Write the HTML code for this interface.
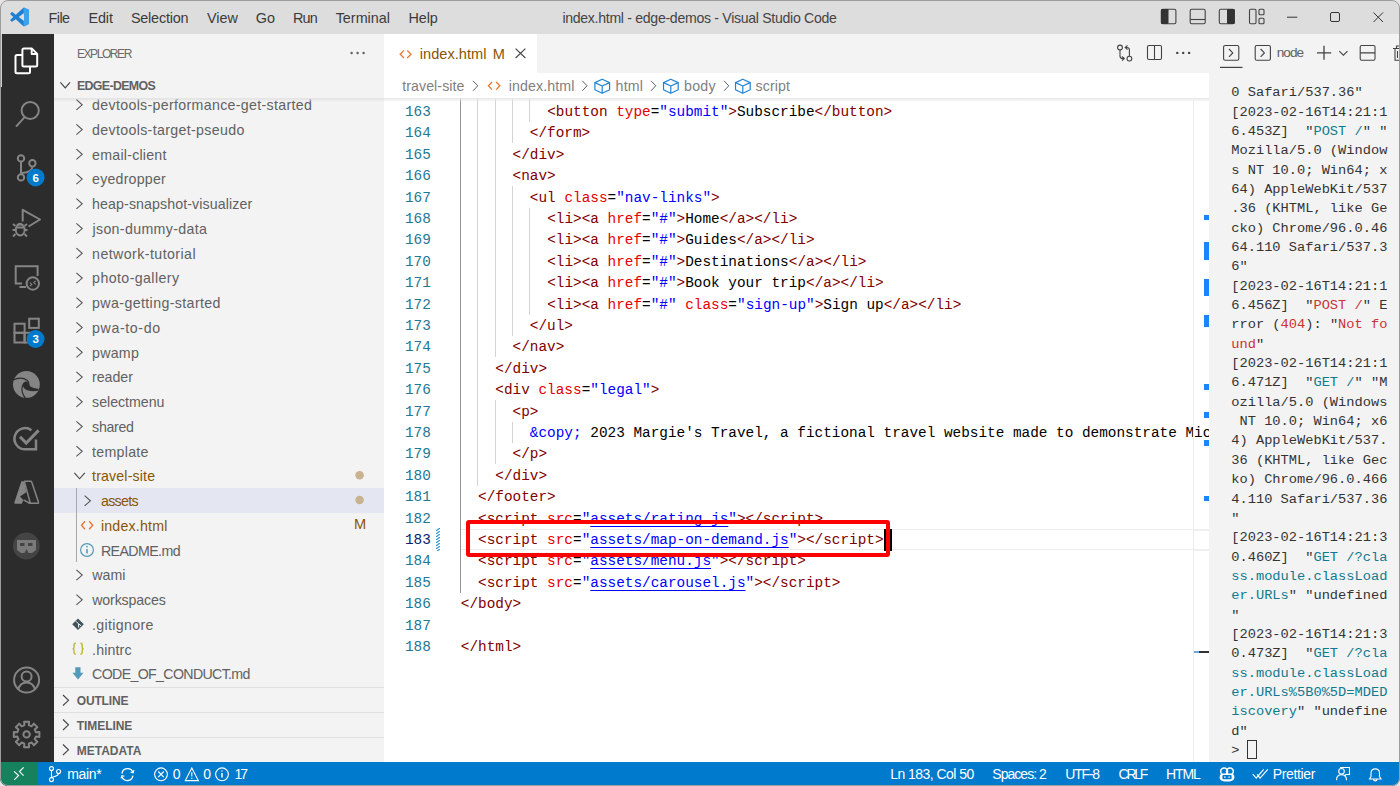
<!DOCTYPE html>
<html><head><meta charset="utf-8">
<style>
*{margin:0;padding:0;box-sizing:border-box}
html,body{width:1400px;height:786px;overflow:hidden;background:#ffffff}
body{font-family:"Liberation Sans",sans-serif;position:relative}
.a{position:absolute}
svg.a{overflow:visible}
</style></head><body>

<div class="a" style="left:0;top:0;width:1400px;height:786px;background:#e8e4e4"></div>
<div class="a" style="left:0;top:0;width:1400px;height:786px;border-radius:8px;overflow:hidden;background:#fff">
<div class="a" style="left:0px;top:0px;width:1400px;height:34px;background:#dddddd;"></div>
<div class="a" style="left:0px;top:34px;width:54px;height:728px;background:#2c2c2c;"></div>
<div class="a" style="left:54px;top:34px;width:330px;height:728px;background:#f3f3f3;"></div>
<div class="a" style="left:384px;top:34px;width:825px;height:39px;background:#f3f3f3;"></div>
<div class="a" style="left:384px;top:34px;width:153px;height:39px;background:#ffffff;"></div>
<div class="a" style="left:384px;top:73px;width:825px;height:689px;background:#ffffff;"></div>
<div class="a" style="left:1209px;top:34px;width:191px;height:728px;background:#f3f3f3;"></div>
<div class="a" style="left:0px;top:762px;width:1400px;height:24px;background:#007acc;"></div>
<div class="a" style="left:0px;top:762px;width:38px;height:24px;background:#16825d;"></div>
<div class="a" style="left:48.60px;top:10.66px;font-family:'Liberation Sans',sans-serif;font-size:14.4px;line-height:14.4px;color:#3b3b3b;letter-spacing:-0.600px;white-space:pre;">File</div>
<div class="a" style="left:88.60px;top:10.66px;font-family:'Liberation Sans',sans-serif;font-size:14.4px;line-height:14.4px;color:#3b3b3b;letter-spacing:-0.167px;white-space:pre;">Edit</div>
<div class="a" style="left:130.90px;top:10.66px;font-family:'Liberation Sans',sans-serif;font-size:14.4px;line-height:14.4px;color:#3b3b3b;letter-spacing:-0.194px;white-space:pre;">Selection</div>
<div class="a" style="left:207.00px;top:10.66px;font-family:'Liberation Sans',sans-serif;font-size:14.4px;line-height:14.4px;color:#3b3b3b;letter-spacing:0.000px;white-space:pre;">View</div>
<div class="a" style="left:255.70px;top:10.66px;font-family:'Liberation Sans',sans-serif;font-size:14.4px;line-height:14.4px;color:#3b3b3b;letter-spacing:0.000px;white-space:pre;">Go</div>
<div class="a" style="left:292.90px;top:10.66px;font-family:'Liberation Sans',sans-serif;font-size:14.4px;line-height:14.4px;color:#3b3b3b;letter-spacing:-0.800px;white-space:pre;">Run</div>
<div class="a" style="left:335.70px;top:10.66px;font-family:'Liberation Sans',sans-serif;font-size:14.4px;line-height:14.4px;color:#3b3b3b;letter-spacing:-0.014px;white-space:pre;">Terminal</div>
<div class="a" style="left:408.60px;top:10.66px;font-family:'Liberation Sans',sans-serif;font-size:14.4px;line-height:14.4px;color:#3b3b3b;letter-spacing:-0.167px;white-space:pre;">Help</div>
<div class="a" style="left:562.40px;top:10.91px;font-family:'Liberation Sans',sans-serif;font-size:14.1px;line-height:14.1px;color:#444444;letter-spacing:-0.297px;white-space:pre;">index.html - edge-demos - Visual Studio Code</div>
<div class="a" style="left:76.90px;top:48.40px;font-family:'Liberation Sans',sans-serif;font-size:12px;line-height:12px;color:#6a6a6a;letter-spacing:-1.421px;white-space:pre;">EXPLORER</div>
<div class="a" style="left:76.90px;top:80.06px;font-family:'Liberation Sans',sans-serif;font-weight:700;font-size:12.4px;line-height:12.4px;color:#616161;letter-spacing:-0.639px;white-space:pre;">EDGE-DEMOS</div>
<div class="a" style="left:92.10px;top:98.03px;font-family:'Liberation Sans',sans-serif;font-size:14.2px;line-height:14.2px;color:#616161;letter-spacing:0.324px;white-space:pre;">devtools-performance-get-started</div>
<div class="a" style="left:92.10px;top:122.78px;font-family:'Liberation Sans',sans-serif;font-size:14.2px;line-height:14.2px;color:#616161;letter-spacing:0.336px;white-space:pre;">devtools-target-pseudo</div>
<div class="a" style="left:92.10px;top:147.53px;font-family:'Liberation Sans',sans-serif;font-size:14.2px;line-height:14.2px;color:#616161;letter-spacing:0.236px;white-space:pre;">email-client</div>
<div class="a" style="left:92.10px;top:172.28px;font-family:'Liberation Sans',sans-serif;font-size:14.2px;line-height:14.2px;color:#616161;letter-spacing:0.206px;white-space:pre;">eyedropper</div>
<div class="a" style="left:92.10px;top:197.03px;font-family:'Liberation Sans',sans-serif;font-size:14.2px;line-height:14.2px;color:#616161;letter-spacing:0.102px;white-space:pre;">heap-snapshot-visualizer</div>
<div class="a" style="left:92.45px;top:221.78px;font-family:'Liberation Sans',sans-serif;font-size:14.2px;line-height:14.2px;color:#616161;letter-spacing:0.346px;white-space:pre;">json-dummy-data</div>
<div class="a" style="left:92.10px;top:246.53px;font-family:'Liberation Sans',sans-serif;font-size:14.2px;line-height:14.2px;color:#616161;letter-spacing:0.430px;white-space:pre;">network-tutorial</div>
<div class="a" style="left:92.10px;top:271.28px;font-family:'Liberation Sans',sans-serif;font-size:14.2px;line-height:14.2px;color:#616161;letter-spacing:0.408px;white-space:pre;">photo-gallery</div>
<div class="a" style="left:92.10px;top:296.03px;font-family:'Liberation Sans',sans-serif;font-size:14.2px;line-height:14.2px;color:#616161;letter-spacing:0.386px;white-space:pre;">pwa-getting-started</div>
<div class="a" style="left:92.10px;top:320.78px;font-family:'Liberation Sans',sans-serif;font-size:14.2px;line-height:14.2px;color:#616161;letter-spacing:0.606px;white-space:pre;">pwa-to-do</div>
<div class="a" style="left:92.10px;top:345.53px;font-family:'Liberation Sans',sans-serif;font-size:14.2px;line-height:14.2px;color:#616161;letter-spacing:0.250px;white-space:pre;">pwamp</div>
<div class="a" style="left:92.10px;top:370.28px;font-family:'Liberation Sans',sans-serif;font-size:14.2px;line-height:14.2px;color:#616161;letter-spacing:-0.050px;white-space:pre;">reader</div>
<div class="a" style="left:92.10px;top:395.03px;font-family:'Liberation Sans',sans-serif;font-size:14.2px;line-height:14.2px;color:#616161;letter-spacing:-0.022px;white-space:pre;">selectmenu</div>
<div class="a" style="left:92.10px;top:419.78px;font-family:'Liberation Sans',sans-serif;font-size:14.2px;line-height:14.2px;color:#616161;letter-spacing:-0.300px;white-space:pre;">shared</div>
<div class="a" style="left:92.10px;top:444.53px;font-family:'Liberation Sans',sans-serif;font-size:14.2px;line-height:14.2px;color:#616161;letter-spacing:0.279px;white-space:pre;">template</div>
<div class="a" style="left:92.10px;top:469.28px;font-family:'Liberation Sans',sans-serif;font-size:14.2px;line-height:14.2px;color:#895503;letter-spacing:0.145px;white-space:pre;">travel-site</div>
<div class="a" style="left:54px;top:488.1px;width:330px;height:24.75px;background:#e4e6f1;"></div>
<div class="a" style="left:100.90px;top:494.03px;font-family:'Liberation Sans',sans-serif;font-size:14.2px;line-height:14.2px;color:#895503;letter-spacing:-0.650px;white-space:pre;">assets</div>
<div class="a" style="left:100.90px;top:518.78px;font-family:'Liberation Sans',sans-serif;font-size:14.2px;line-height:14.2px;color:#895503;letter-spacing:0.200px;white-space:pre;">index.html</div>
<div class="a" style="left:100.90px;top:543.53px;font-family:'Liberation Sans',sans-serif;font-size:14.2px;line-height:14.2px;color:#616161;letter-spacing:-0.588px;white-space:pre;">README.md</div>
<div class="a" style="left:92.15px;top:568.28px;font-family:'Liberation Sans',sans-serif;font-size:14.2px;line-height:14.2px;color:#616161;letter-spacing:0.067px;white-space:pre;">wami</div>
<div class="a" style="left:92.15px;top:593.03px;font-family:'Liberation Sans',sans-serif;font-size:14.2px;line-height:14.2px;color:#616161;letter-spacing:-0.122px;white-space:pre;">workspaces</div>
<div class="a" style="left:92.10px;top:617.78px;font-family:'Liberation Sans',sans-serif;font-size:14.2px;line-height:14.2px;color:#616161;letter-spacing:0.322px;white-space:pre;">.gitignore</div>
<div class="a" style="left:92.10px;top:642.53px;font-family:'Liberation Sans',sans-serif;font-size:14.2px;line-height:14.2px;color:#616161;letter-spacing:0.125px;white-space:pre;">.hintrc</div>
<div class="a" style="left:92.10px;top:667.28px;font-family:'Liberation Sans',sans-serif;font-size:14.2px;line-height:14.2px;color:#616161;letter-spacing:-0.656px;white-space:pre;">CODE_OF_CONDUCT.md</div>
<div class="a" style="left:384px;top:98px;width:825px;height:664px;overflow:hidden">
<div class="a" style="left:77px;top:430.50px;width:809px;height:21.4px;border-top:1.5px solid #eeeeee;border-bottom:1.5px solid #eeeeee"></div>
<div class="a" style="left:76.00px;top:-18.90px;width:1px;height:513.60px;background:#939393"></div>
<div class="a" style="left:93.27px;top:-18.90px;width:1px;height:406.60px;background:#d3d3d3"></div>
<div class="a" style="left:110.54px;top:-18.90px;width:1px;height:278.20px;background:#d3d3d3"></div>
<div class="a" style="left:110.54px;top:302.10px;width:1px;height:64.20px;background:#d3d3d3"></div>
<div class="a" style="left:127.80px;top:-18.90px;width:1px;height:64.20px;background:#d3d3d3"></div>
<div class="a" style="left:127.80px;top:88.10px;width:1px;height:149.80px;background:#d3d3d3"></div>
<div class="a" style="left:127.80px;top:323.50px;width:1px;height:21.40px;background:#d3d3d3"></div>
<div class="a" style="left:145.07px;top:-18.90px;width:1px;height:42.80px;background:#d3d3d3"></div>
<div class="a" style="left:145.07px;top:109.50px;width:1px;height:107.00px;background:#d3d3d3"></div>
<div class="a" style="left:163.14px;top:-14.34px;font-family:'Liberation Mono',monospace;font-size:14.39px;line-height:14.39px;white-space:pre"><span style="color:#800000">&lt;input</span><span style="color:#000000"> </span><span style="color:#e50000">type</span><span style="color:#000000">=</span><span style="color:#0000ff">&quot;email&quot;</span><span style="color:#000000"> </span><span style="color:#e50000">placeholder</span><span style="color:#000000">=</span><span style="color:#0000ff">&quot;Email&quot;</span><span style="color:#800000">&gt;</span></div>
<div class="a" style="left:163.14px;top:7.06px;font-family:'Liberation Mono',monospace;font-size:14.39px;line-height:14.39px;white-space:pre"><span style="color:#800000">&lt;button</span><span style="color:#000000"> </span><span style="color:#e50000">type</span><span style="color:#000000">=</span><span style="color:#0000ff">&quot;submit&quot;</span><span style="color:#800000">&gt;</span><span style="color:#000000">Subscribe</span><span style="color:#800000">&lt;/button&gt;</span></div>
<div class="a" style="left:145.87px;top:28.46px;font-family:'Liberation Mono',monospace;font-size:14.39px;line-height:14.39px;white-space:pre"><span style="color:#800000">&lt;/form&gt;</span></div>
<div class="a" style="left:128.60px;top:49.86px;font-family:'Liberation Mono',monospace;font-size:14.39px;line-height:14.39px;white-space:pre"><span style="color:#800000">&lt;/div&gt;</span></div>
<div class="a" style="left:128.60px;top:71.26px;font-family:'Liberation Mono',monospace;font-size:14.39px;line-height:14.39px;white-space:pre"><span style="color:#800000">&lt;nav&gt;</span></div>
<div class="a" style="left:145.87px;top:92.66px;font-family:'Liberation Mono',monospace;font-size:14.39px;line-height:14.39px;white-space:pre"><span style="color:#800000">&lt;ul</span><span style="color:#000000"> </span><span style="color:#e50000">class</span><span style="color:#000000">=</span><span style="color:#0000ff">&quot;nav-links&quot;</span><span style="color:#800000">&gt;</span></div>
<div class="a" style="left:163.14px;top:114.06px;font-family:'Liberation Mono',monospace;font-size:14.39px;line-height:14.39px;white-space:pre"><span style="color:#800000">&lt;li&gt;&lt;a</span><span style="color:#000000"> </span><span style="color:#e50000">href</span><span style="color:#000000">=</span><span style="color:#0000ff">&quot;#&quot;</span><span style="color:#800000">&gt;</span><span style="color:#000000">Home</span><span style="color:#800000">&lt;/a&gt;&lt;/li&gt;</span></div>
<div class="a" style="left:163.14px;top:135.46px;font-family:'Liberation Mono',monospace;font-size:14.39px;line-height:14.39px;white-space:pre"><span style="color:#800000">&lt;li&gt;&lt;a</span><span style="color:#000000"> </span><span style="color:#e50000">href</span><span style="color:#000000">=</span><span style="color:#0000ff">&quot;#&quot;</span><span style="color:#800000">&gt;</span><span style="color:#000000">Guides</span><span style="color:#800000">&lt;/a&gt;&lt;/li&gt;</span></div>
<div class="a" style="left:163.14px;top:156.86px;font-family:'Liberation Mono',monospace;font-size:14.39px;line-height:14.39px;white-space:pre"><span style="color:#800000">&lt;li&gt;&lt;a</span><span style="color:#000000"> </span><span style="color:#e50000">href</span><span style="color:#000000">=</span><span style="color:#0000ff">&quot;#&quot;</span><span style="color:#800000">&gt;</span><span style="color:#000000">Destinations</span><span style="color:#800000">&lt;/a&gt;&lt;/li&gt;</span></div>
<div class="a" style="left:163.14px;top:178.26px;font-family:'Liberation Mono',monospace;font-size:14.39px;line-height:14.39px;white-space:pre"><span style="color:#800000">&lt;li&gt;&lt;a</span><span style="color:#000000"> </span><span style="color:#e50000">href</span><span style="color:#000000">=</span><span style="color:#0000ff">&quot;#&quot;</span><span style="color:#800000">&gt;</span><span style="color:#000000">Book your trip</span><span style="color:#800000">&lt;/a&gt;&lt;/li&gt;</span></div>
<div class="a" style="left:163.14px;top:199.66px;font-family:'Liberation Mono',monospace;font-size:14.39px;line-height:14.39px;white-space:pre"><span style="color:#800000">&lt;li&gt;&lt;a</span><span style="color:#000000"> </span><span style="color:#e50000">href</span><span style="color:#000000">=</span><span style="color:#0000ff">&quot;#&quot;</span><span style="color:#000000"> </span><span style="color:#e50000">class</span><span style="color:#000000">=</span><span style="color:#0000ff">&quot;sign-up&quot;</span><span style="color:#800000">&gt;</span><span style="color:#000000">Sign up</span><span style="color:#800000">&lt;/a&gt;&lt;/li&gt;</span></div>
<div class="a" style="left:145.87px;top:221.06px;font-family:'Liberation Mono',monospace;font-size:14.39px;line-height:14.39px;white-space:pre"><span style="color:#800000">&lt;/ul&gt;</span></div>
<div class="a" style="left:128.60px;top:242.46px;font-family:'Liberation Mono',monospace;font-size:14.39px;line-height:14.39px;white-space:pre"><span style="color:#800000">&lt;/nav&gt;</span></div>
<div class="a" style="left:111.34px;top:263.86px;font-family:'Liberation Mono',monospace;font-size:14.39px;line-height:14.39px;white-space:pre"><span style="color:#800000">&lt;/div&gt;</span></div>
<div class="a" style="left:111.34px;top:285.26px;font-family:'Liberation Mono',monospace;font-size:14.39px;line-height:14.39px;white-space:pre"><span style="color:#800000">&lt;div</span><span style="color:#000000"> </span><span style="color:#e50000">class</span><span style="color:#000000">=</span><span style="color:#0000ff">&quot;legal&quot;</span><span style="color:#800000">&gt;</span></div>
<div class="a" style="left:128.60px;top:306.66px;font-family:'Liberation Mono',monospace;font-size:14.39px;line-height:14.39px;white-space:pre"><span style="color:#800000">&lt;p&gt;</span></div>
<div class="a" style="left:145.87px;top:328.06px;font-family:'Liberation Mono',monospace;font-size:14.39px;line-height:14.39px;white-space:pre"><span style="color:#0000ff">&amp;copy;</span><span style="color:#000000"> 2023 Margie&#x27;s Travel, a fictional travel website made to demonstrate Microsoft Edge</span></div>
<div class="a" style="left:128.60px;top:349.46px;font-family:'Liberation Mono',monospace;font-size:14.39px;line-height:14.39px;white-space:pre"><span style="color:#800000">&lt;/p&gt;</span></div>
<div class="a" style="left:111.34px;top:370.86px;font-family:'Liberation Mono',monospace;font-size:14.39px;line-height:14.39px;white-space:pre"><span style="color:#800000">&lt;/div&gt;</span></div>
<div class="a" style="left:94.07px;top:392.26px;font-family:'Liberation Mono',monospace;font-size:14.39px;line-height:14.39px;white-space:pre"><span style="color:#800000">&lt;/footer&gt;</span></div>
<div class="a" style="left:94.07px;top:413.66px;font-family:'Liberation Mono',monospace;font-size:14.39px;line-height:14.39px;white-space:pre"><span style="color:#800000">&lt;script</span><span style="color:#000000"> </span><span style="color:#e50000">src</span><span style="color:#000000">=</span><span style="color:#0000ff">&quot;</span><span style="color:#0000ff;text-decoration:underline;text-underline-offset:3px">assets/rating.js</span><span style="color:#0000ff">&quot;</span><span style="color:#800000">&gt;&lt;/script&gt;</span></div>
<div class="a" style="left:94.07px;top:435.06px;font-family:'Liberation Mono',monospace;font-size:14.39px;line-height:14.39px;white-space:pre"><span style="color:#800000">&lt;script</span><span style="color:#000000"> </span><span style="color:#e50000">src</span><span style="color:#000000">=</span><span style="color:#0000ff">&quot;</span><span style="color:#0000ff;text-decoration:underline;text-underline-offset:3px">assets/map-on-demand.js</span><span style="color:#0000ff">&quot;</span><span style="color:#800000">&gt;&lt;/script&gt;</span></div>
<div class="a" style="left:94.07px;top:456.46px;font-family:'Liberation Mono',monospace;font-size:14.39px;line-height:14.39px;white-space:pre"><span style="color:#800000">&lt;script</span><span style="color:#000000"> </span><span style="color:#e50000">src</span><span style="color:#000000">=</span><span style="color:#0000ff">&quot;</span><span style="color:#0000ff;text-decoration:underline;text-underline-offset:3px">assets/menu.js</span><span style="color:#0000ff">&quot;</span><span style="color:#800000">&gt;&lt;/script&gt;</span></div>
<div class="a" style="left:94.07px;top:477.86px;font-family:'Liberation Mono',monospace;font-size:14.39px;line-height:14.39px;white-space:pre"><span style="color:#800000">&lt;script</span><span style="color:#000000"> </span><span style="color:#e50000">src</span><span style="color:#000000">=</span><span style="color:#0000ff">&quot;</span><span style="color:#0000ff;text-decoration:underline;text-underline-offset:3px">assets/carousel.js</span><span style="color:#0000ff">&quot;</span><span style="color:#800000">&gt;&lt;/script&gt;</span></div>
<div class="a" style="left:76.80px;top:499.26px;font-family:'Liberation Mono',monospace;font-size:14.39px;line-height:14.39px;white-space:pre"><span style="color:#800000">&lt;/body&gt;</span></div>
<div class="a" style="left:76.80px;top:542.06px;font-family:'Liberation Mono',monospace;font-size:14.39px;line-height:14.39px;white-space:pre"><span style="color:#800000">&lt;/html&gt;</span></div>
</div>
<div class="a" style="left:378.8px;width:52px;text-align:right;top:105.08px;font-family:'Liberation Mono',monospace;font-size:14.37px;line-height:14.37px;color:#237893">163</div>
<div class="a" style="left:378.8px;width:52px;text-align:right;top:126.48px;font-family:'Liberation Mono',monospace;font-size:14.37px;line-height:14.37px;color:#237893">164</div>
<div class="a" style="left:378.8px;width:52px;text-align:right;top:147.88px;font-family:'Liberation Mono',monospace;font-size:14.37px;line-height:14.37px;color:#237893">165</div>
<div class="a" style="left:378.8px;width:52px;text-align:right;top:169.28px;font-family:'Liberation Mono',monospace;font-size:14.37px;line-height:14.37px;color:#237893">166</div>
<div class="a" style="left:378.8px;width:52px;text-align:right;top:190.68px;font-family:'Liberation Mono',monospace;font-size:14.37px;line-height:14.37px;color:#237893">167</div>
<div class="a" style="left:378.8px;width:52px;text-align:right;top:212.08px;font-family:'Liberation Mono',monospace;font-size:14.37px;line-height:14.37px;color:#237893">168</div>
<div class="a" style="left:378.8px;width:52px;text-align:right;top:233.48px;font-family:'Liberation Mono',monospace;font-size:14.37px;line-height:14.37px;color:#237893">169</div>
<div class="a" style="left:378.8px;width:52px;text-align:right;top:254.88px;font-family:'Liberation Mono',monospace;font-size:14.37px;line-height:14.37px;color:#237893">170</div>
<div class="a" style="left:378.8px;width:52px;text-align:right;top:276.28px;font-family:'Liberation Mono',monospace;font-size:14.37px;line-height:14.37px;color:#237893">171</div>
<div class="a" style="left:378.8px;width:52px;text-align:right;top:297.68px;font-family:'Liberation Mono',monospace;font-size:14.37px;line-height:14.37px;color:#237893">172</div>
<div class="a" style="left:378.8px;width:52px;text-align:right;top:319.08px;font-family:'Liberation Mono',monospace;font-size:14.37px;line-height:14.37px;color:#237893">173</div>
<div class="a" style="left:378.8px;width:52px;text-align:right;top:340.48px;font-family:'Liberation Mono',monospace;font-size:14.37px;line-height:14.37px;color:#237893">174</div>
<div class="a" style="left:378.8px;width:52px;text-align:right;top:361.88px;font-family:'Liberation Mono',monospace;font-size:14.37px;line-height:14.37px;color:#237893">175</div>
<div class="a" style="left:378.8px;width:52px;text-align:right;top:383.28px;font-family:'Liberation Mono',monospace;font-size:14.37px;line-height:14.37px;color:#237893">176</div>
<div class="a" style="left:378.8px;width:52px;text-align:right;top:404.68px;font-family:'Liberation Mono',monospace;font-size:14.37px;line-height:14.37px;color:#237893">177</div>
<div class="a" style="left:378.8px;width:52px;text-align:right;top:426.08px;font-family:'Liberation Mono',monospace;font-size:14.37px;line-height:14.37px;color:#237893">178</div>
<div class="a" style="left:378.8px;width:52px;text-align:right;top:447.48px;font-family:'Liberation Mono',monospace;font-size:14.37px;line-height:14.37px;color:#237893">179</div>
<div class="a" style="left:378.8px;width:52px;text-align:right;top:468.88px;font-family:'Liberation Mono',monospace;font-size:14.37px;line-height:14.37px;color:#237893">180</div>
<div class="a" style="left:378.8px;width:52px;text-align:right;top:490.28px;font-family:'Liberation Mono',monospace;font-size:14.37px;line-height:14.37px;color:#237893">181</div>
<div class="a" style="left:378.8px;width:52px;text-align:right;top:511.68px;font-family:'Liberation Mono',monospace;font-size:14.37px;line-height:14.37px;color:#237893">182</div>
<div class="a" style="left:378.8px;width:52px;text-align:right;top:533.08px;font-family:'Liberation Mono',monospace;font-size:14.37px;line-height:14.37px;color:#0b216f">183</div>
<div class="a" style="left:378.8px;width:52px;text-align:right;top:554.48px;font-family:'Liberation Mono',monospace;font-size:14.37px;line-height:14.37px;color:#237893">184</div>
<div class="a" style="left:378.8px;width:52px;text-align:right;top:575.88px;font-family:'Liberation Mono',monospace;font-size:14.37px;line-height:14.37px;color:#237893">185</div>
<div class="a" style="left:378.8px;width:52px;text-align:right;top:597.28px;font-family:'Liberation Mono',monospace;font-size:14.37px;line-height:14.37px;color:#237893">186</div>
<div class="a" style="left:378.8px;width:52px;text-align:right;top:618.68px;font-family:'Liberation Mono',monospace;font-size:14.37px;line-height:14.37px;color:#237893">187</div>
<div class="a" style="left:378.8px;width:52px;text-align:right;top:640.08px;font-family:'Liberation Mono',monospace;font-size:14.37px;line-height:14.37px;color:#237893">188</div>
<div class="a" style="left:1231.3px;top:86.19px;font-family:'Liberation Mono',monospace;font-size:13.7px;line-height:13.7px;letter-spacing:0.0px;white-space:pre"><span style="color:#333333">0 Safari/537.36&quot;</span></div>
<div class="a" style="left:1231.3px;top:105.54px;font-family:'Liberation Mono',monospace;font-size:13.7px;line-height:13.7px;letter-spacing:0.0px;white-space:pre"><span style="color:#333333">[2023-02-16T14:21:1</span></div>
<div class="a" style="left:1231.3px;top:124.89px;font-family:'Liberation Mono',monospace;font-size:13.7px;line-height:13.7px;letter-spacing:0.0px;white-space:pre"><span style="color:#333333">6.453Z]  &quot;</span><span style="color:#0f7a8f">POST /</span><span style="color:#333333">&quot; &quot;</span></div>
<div class="a" style="left:1231.3px;top:144.24px;font-family:'Liberation Mono',monospace;font-size:13.7px;line-height:13.7px;letter-spacing:0.0px;white-space:pre"><span style="color:#333333">Mozilla/5.0 (Window</span></div>
<div class="a" style="left:1231.3px;top:163.59px;font-family:'Liberation Mono',monospace;font-size:13.7px;line-height:13.7px;letter-spacing:0.0px;white-space:pre"><span style="color:#333333">s NT 10.0; Win64; x</span></div>
<div class="a" style="left:1231.3px;top:182.94px;font-family:'Liberation Mono',monospace;font-size:13.7px;line-height:13.7px;letter-spacing:0.0px;white-space:pre"><span style="color:#333333">64) AppleWebKit/537</span></div>
<div class="a" style="left:1231.3px;top:202.29px;font-family:'Liberation Mono',monospace;font-size:13.7px;line-height:13.7px;letter-spacing:0.0px;white-space:pre"><span style="color:#333333">.36 (KHTML, like Ge</span></div>
<div class="a" style="left:1231.3px;top:221.64px;font-family:'Liberation Mono',monospace;font-size:13.7px;line-height:13.7px;letter-spacing:0.0px;white-space:pre"><span style="color:#333333">cko) Chrome/96.0.46</span></div>
<div class="a" style="left:1231.3px;top:240.99px;font-family:'Liberation Mono',monospace;font-size:13.7px;line-height:13.7px;letter-spacing:0.0px;white-space:pre"><span style="color:#333333">64.110 Safari/537.3</span></div>
<div class="a" style="left:1231.3px;top:260.34px;font-family:'Liberation Mono',monospace;font-size:13.7px;line-height:13.7px;letter-spacing:0.0px;white-space:pre"><span style="color:#333333">6&quot;</span></div>
<div class="a" style="left:1231.3px;top:279.69px;font-family:'Liberation Mono',monospace;font-size:13.7px;line-height:13.7px;letter-spacing:0.0px;white-space:pre"><span style="color:#333333">[2023-02-16T14:21:1</span></div>
<div class="a" style="left:1231.3px;top:299.04px;font-family:'Liberation Mono',monospace;font-size:13.7px;line-height:13.7px;letter-spacing:0.0px;white-space:pre"><span style="color:#333333">6.456Z]  &quot;</span><span style="color:#cd3131">POST /</span><span style="color:#333333">&quot; E</span></div>
<div class="a" style="left:1231.3px;top:318.39px;font-family:'Liberation Mono',monospace;font-size:13.7px;line-height:13.7px;letter-spacing:0.0px;white-space:pre"><span style="color:#333333">rror (</span><span style="color:#cd3131">404</span><span style="color:#333333">): &quot;</span><span style="color:#cd3131">Not fo</span></div>
<div class="a" style="left:1231.3px;top:337.74px;font-family:'Liberation Mono',monospace;font-size:13.7px;line-height:13.7px;letter-spacing:0.0px;white-space:pre"><span style="color:#cd3131">und</span><span style="color:#333333">&quot;</span></div>
<div class="a" style="left:1231.3px;top:357.09px;font-family:'Liberation Mono',monospace;font-size:13.7px;line-height:13.7px;letter-spacing:0.0px;white-space:pre"><span style="color:#333333">[2023-02-16T14:21:1</span></div>
<div class="a" style="left:1231.3px;top:376.44px;font-family:'Liberation Mono',monospace;font-size:13.7px;line-height:13.7px;letter-spacing:0.0px;white-space:pre"><span style="color:#333333">6.471Z]  &quot;</span><span style="color:#0f7a8f">GET /</span><span style="color:#333333">&quot; &quot;M</span></div>
<div class="a" style="left:1231.3px;top:395.79px;font-family:'Liberation Mono',monospace;font-size:13.7px;line-height:13.7px;letter-spacing:0.0px;white-space:pre"><span style="color:#333333">ozilla/5.0 (Windows</span></div>
<div class="a" style="left:1231.3px;top:415.14px;font-family:'Liberation Mono',monospace;font-size:13.7px;line-height:13.7px;letter-spacing:0.0px;white-space:pre"><span style="color:#333333"> NT 10.0; Win64; x6</span></div>
<div class="a" style="left:1231.3px;top:434.49px;font-family:'Liberation Mono',monospace;font-size:13.7px;line-height:13.7px;letter-spacing:0.0px;white-space:pre"><span style="color:#333333">4) AppleWebKit/537.</span></div>
<div class="a" style="left:1231.3px;top:453.84px;font-family:'Liberation Mono',monospace;font-size:13.7px;line-height:13.7px;letter-spacing:0.0px;white-space:pre"><span style="color:#333333">36 (KHTML, like Gec</span></div>
<div class="a" style="left:1231.3px;top:473.19px;font-family:'Liberation Mono',monospace;font-size:13.7px;line-height:13.7px;letter-spacing:0.0px;white-space:pre"><span style="color:#333333">ko) Chrome/96.0.466</span></div>
<div class="a" style="left:1231.3px;top:492.54px;font-family:'Liberation Mono',monospace;font-size:13.7px;line-height:13.7px;letter-spacing:0.0px;white-space:pre"><span style="color:#333333">4.110 Safari/537.36</span></div>
<div class="a" style="left:1231.3px;top:511.89px;font-family:'Liberation Mono',monospace;font-size:13.7px;line-height:13.7px;letter-spacing:0.0px;white-space:pre"><span style="color:#333333">&quot;</span></div>
<div class="a" style="left:1231.3px;top:531.24px;font-family:'Liberation Mono',monospace;font-size:13.7px;line-height:13.7px;letter-spacing:0.0px;white-space:pre"><span style="color:#333333">[2023-02-16T14:21:3</span></div>
<div class="a" style="left:1231.3px;top:550.59px;font-family:'Liberation Mono',monospace;font-size:13.7px;line-height:13.7px;letter-spacing:0.0px;white-space:pre"><span style="color:#333333">0.460Z]  &quot;</span><span style="color:#0f7a8f">GET /?cla</span></div>
<div class="a" style="left:1231.3px;top:569.94px;font-family:'Liberation Mono',monospace;font-size:13.7px;line-height:13.7px;letter-spacing:0.0px;white-space:pre"><span style="color:#0f7a8f">ss.module.classLoad</span></div>
<div class="a" style="left:1231.3px;top:589.29px;font-family:'Liberation Mono',monospace;font-size:13.7px;line-height:13.7px;letter-spacing:0.0px;white-space:pre"><span style="color:#0f7a8f">er.URLs</span><span style="color:#333333">&quot; &quot;undefined</span></div>
<div class="a" style="left:1231.3px;top:608.64px;font-family:'Liberation Mono',monospace;font-size:13.7px;line-height:13.7px;letter-spacing:0.0px;white-space:pre"><span style="color:#333333">&quot;</span></div>
<div class="a" style="left:1231.3px;top:627.99px;font-family:'Liberation Mono',monospace;font-size:13.7px;line-height:13.7px;letter-spacing:0.0px;white-space:pre"><span style="color:#333333">[2023-02-16T14:21:3</span></div>
<div class="a" style="left:1231.3px;top:647.34px;font-family:'Liberation Mono',monospace;font-size:13.7px;line-height:13.7px;letter-spacing:0.0px;white-space:pre"><span style="color:#333333">0.473Z]  &quot;</span><span style="color:#0f7a8f">GET /?cla</span></div>
<div class="a" style="left:1231.3px;top:666.69px;font-family:'Liberation Mono',monospace;font-size:13.7px;line-height:13.7px;letter-spacing:0.0px;white-space:pre"><span style="color:#0f7a8f">ss.module.classLoad</span></div>
<div class="a" style="left:1231.3px;top:686.04px;font-family:'Liberation Mono',monospace;font-size:13.7px;line-height:13.7px;letter-spacing:0.0px;white-space:pre"><span style="color:#0f7a8f">er.URLs%5B0%5D=MDED</span></div>
<div class="a" style="left:1231.3px;top:705.39px;font-family:'Liberation Mono',monospace;font-size:13.7px;line-height:13.7px;letter-spacing:0.0px;white-space:pre"><span style="color:#0f7a8f">iscovery</span><span style="color:#333333">&quot; &quot;undefine</span></div>
<div class="a" style="left:1231.3px;top:724.74px;font-family:'Liberation Mono',monospace;font-size:13.7px;line-height:13.7px;letter-spacing:0.0px;white-space:pre"><span style="color:#333333">d&quot;</span></div>
<div class="a" style="left:1231.3px;top:744.09px;font-family:'Liberation Mono',monospace;font-size:13.7px;line-height:13.7px;letter-spacing:0.0px;white-space:pre"><span style="color:#333333">&gt; </span></div>
<div class="a" style="left:1247px;top:739.5px;width:9.5px;height:19.5px;border:1px solid #333"></div>
<div class="a" style="left:419.80px;top:46.79px;font-family:'Liberation Sans',sans-serif;font-size:14.6px;line-height:14.6px;color:#895503;letter-spacing:0.017px;white-space:pre;">index.html</div>
<div class="a" style="left:492.80px;top:46.79px;font-family:'Liberation Sans',sans-serif;font-size:14.6px;line-height:14.6px;color:#895503;letter-spacing:0.000px;white-space:pre;">M</div>
<div class="a" style="left:1276.80px;top:46.24px;font-family:'Liberation Sans',sans-serif;font-size:13.6px;line-height:13.6px;color:#616161;letter-spacing:-1.017px;white-space:pre;">node</div>
<div class="a" style="left:67.20px;top:767.30px;font-family:'Liberation Sans',sans-serif;font-size:14px;line-height:14px;color:#ffffff;letter-spacing:-0.300px;white-space:pre;">main*</div>
<div class="a" style="left:172.70px;top:767.30px;font-family:'Liberation Sans',sans-serif;font-size:14px;line-height:14px;color:#ffffff;letter-spacing:0.000px;white-space:pre;">0</div>
<div class="a" style="left:203.30px;top:767.30px;font-family:'Liberation Sans',sans-serif;font-size:14px;line-height:14px;color:#ffffff;letter-spacing:0.000px;white-space:pre;">0</div>
<div class="a" style="left:234.40px;top:767.30px;font-family:'Liberation Sans',sans-serif;font-size:14px;line-height:14px;color:#ffffff;letter-spacing:-1.950px;white-space:pre;">17</div>
<div class="a" style="left:890.20px;top:767.30px;font-family:'Liberation Sans',sans-serif;font-size:14px;line-height:14px;color:#ffffff;letter-spacing:-0.535px;white-space:pre;">Ln 183, Col 50</div>
<div class="a" style="left:992.30px;top:767.30px;font-family:'Liberation Sans',sans-serif;font-size:14px;line-height:14px;color:#ffffff;letter-spacing:-0.969px;white-space:pre;">Spaces: 2</div>
<div class="a" style="left:1065.30px;top:767.30px;font-family:'Liberation Sans',sans-serif;font-size:14px;line-height:14px;color:#ffffff;letter-spacing:-1.237px;white-space:pre;">UTF-8</div>
<div class="a" style="left:1118.60px;top:767.30px;font-family:'Liberation Sans',sans-serif;font-size:14px;line-height:14px;color:#ffffff;letter-spacing:-2.250px;white-space:pre;">CRLF</div>
<div class="a" style="left:1166.00px;top:767.30px;font-family:'Liberation Sans',sans-serif;font-size:14px;line-height:14px;color:#ffffff;letter-spacing:-1.067px;white-space:pre;">HTML</div>
<div class="a" style="left:1272.80px;top:767.30px;font-family:'Liberation Sans',sans-serif;font-size:14px;line-height:14px;color:#ffffff;letter-spacing:-0.350px;white-space:pre;">Prettier</div>
<div class="a" style="left:402.20px;top:78.83px;font-family:'Liberation Sans',sans-serif;font-size:14.2px;line-height:14.2px;color:#7f7f7f;letter-spacing:0.075px;white-space:pre;">travel-site</div>
<div class="a" style="left:508.70px;top:78.83px;font-family:'Liberation Sans',sans-serif;font-size:14.2px;line-height:14.2px;color:#7f7f7f;letter-spacing:0.111px;white-space:pre;">index.html</div>
<div class="a" style="left:615.60px;top:78.83px;font-family:'Liberation Sans',sans-serif;font-size:14.2px;line-height:14.2px;color:#7f7f7f;letter-spacing:0.183px;white-space:pre;">html</div>
<div class="a" style="left:684.10px;top:78.83px;font-family:'Liberation Sans',sans-serif;font-size:14.2px;line-height:14.2px;color:#7f7f7f;letter-spacing:0.233px;white-space:pre;">body</div>
<div class="a" style="left:755.60px;top:78.83px;font-family:'Liberation Sans',sans-serif;font-size:14.2px;line-height:14.2px;color:#7f7f7f;letter-spacing:0.110px;white-space:pre;">script</div>
<div class="a" style="left:76.80px;top:695.40px;font-family:'Liberation Sans',sans-serif;font-weight:700;font-size:12px;line-height:12px;color:#616161;letter-spacing:-0.175px;white-space:pre;">OUTLINE</div>
<div class="a" style="left:76.80px;top:720.00px;font-family:'Liberation Sans',sans-serif;font-weight:700;font-size:12px;line-height:12px;color:#616161;letter-spacing:-0.071px;white-space:pre;">TIMELINE</div>
<div class="a" style="left:76.80px;top:744.80px;font-family:'Liberation Sans',sans-serif;font-weight:700;font-size:12px;line-height:12px;color:#616161;letter-spacing:-0.007px;white-space:pre;">METADATA</div>
<div class="a" style="left:54px;top:687px;width:330px;height:1px;background:#e0e0e0;"></div>
<div class="a" style="left:54px;top:712px;width:330px;height:1px;background:#e0e0e0;"></div>
<div class="a" style="left:54px;top:737px;width:330px;height:1px;background:#e0e0e0;"></div>
<div class="a" style="left:76px;top:488px;width:1px;height:74px;background:#a8a8a8;"></div>
<div class="a" style="left:353.90px;top:517.09px;font-family:'Liberation Sans',sans-serif;font-size:14.6px;line-height:14.6px;color:#895503;letter-spacing:0.000px;white-space:pre;">M</div>
<div class="a" style="left:54px;top:98px;width:330px;height:4px;background:linear-gradient(#e2e2e2,rgba(243,243,243,0))"></div>
<div class="a" style="left:384px;top:98px;width:825px;height:4px;background:linear-gradient(#e6e6e6,rgba(255,255,255,0))"></div>
<div class="a" style="left:1193px;top:98px;width:1px;height:664px;background:#ececec;"></div>
<div class="a" style="left:1204px;top:214.5px;width:4.5px;height:5.5px;background:#1a85ff;"></div>
<div class="a" style="left:1204px;top:241.9px;width:4.5px;height:18.099999999999994px;background:#1a85ff;"></div>
<div class="a" style="left:1204px;top:278.8px;width:4.5px;height:17.599999999999966px;background:#1a85ff;"></div>
<div class="a" style="left:1204px;top:314.5px;width:4.5px;height:12.5px;background:#1a85ff;"></div>
<div class="a" style="left:1204px;top:384.4px;width:4.5px;height:6.100000000000023px;background:#1a85ff;"></div>
<div class="a" style="left:1204px;top:411.7px;width:4.5px;height:6.199999999999989px;background:#1a85ff;"></div>
<div class="a" style="left:1204px;top:439.9px;width:4.5px;height:5.900000000000034px;background:#1a85ff;"></div>
<div class="a" style="left:1204px;top:495.5px;width:4.5px;height:5.5px;background:#1a85ff;"></div>
<div class="a" style="left:1194px;top:651px;width:15px;height:1.5px;background:#333333;"></div>
<div class="a" style="left:1194px;top:651px;width:5px;height:2px;background:#6fa8dc;"></div>
<div class="a" style="left:1193px;top:529px;width:16px;height:1.5px;background:#eeeeee;"></div>
<div class="a" style="left:1193px;top:549px;width:16px;height:1.5px;background:#eeeeee;"></div>
<div class="a" style="left:884px;top:529px;width:8px;height:21.5px;background:#000000;"></div>
<div class="a" style="left:466px;top:520.3px;width:424px;height:36.7px;border:4px solid #ff0000;border-radius:3px"></div>
<svg class="a" style="left:436px;top:528px" width="4" height="23" viewBox="0 0 4 23"><defs><pattern id="gp" width="4" height="3" patternUnits="userSpaceOnUse"><path d="M0,3 L4,0" stroke="#2a93d0" stroke-width="1.2"/></pattern></defs><rect width="4" height="23" fill="url(#gp)"/></svg>
<svg class="a" style="left:0;top:0" width="1400" height="786" viewBox="0 0 1400 786"><defs><clipPath id="lgc"><rect x="71" y="-5" width="40" height="110"/></clipPath></defs><g transform="translate(10.3,7.6) scale(0.187)"><path d="M96.46,10.8 L75.86,0.87 C73.48,-0.27 70.62,0.21 68.75,2.08 L29.34,38.04 L12.17,25.01 C10.57,23.8 8.34,23.9 6.86,25.25 L1.35,30.26 C-0.46,31.91 -0.46,34.76 1.35,36.41 L16.24,50 L1.35,63.59 C-0.46,65.24 -0.46,68.09 1.35,69.74 L6.86,74.75 C8.34,76.1 10.57,76.2 12.17,74.99 L29.34,61.96 L68.75,97.92 C70.62,99.79 73.48,100.27 75.86,99.13 L96.46,89.2 C98.62,88.16 100,85.97 100,83.57 V16.43 C100,14.03 98.62,11.84 96.46,10.8 Z M75.02,27.29 L45.12,50 L75.02,72.71 V27.29 Z" fill="#1f7fd0" fill-rule="evenodd"/><path d="M96.46,10.8 L75.86,0.87 C73.48,-0.27 70.62,0.21 68.75,2.08 L29.34,38.04 L12.17,25.01 C10.57,23.8 8.34,23.9 6.86,25.25 L1.35,30.26 C-0.46,31.91 -0.46,34.76 1.35,36.41 L16.24,50 L1.35,63.59 C-0.46,65.24 -0.46,68.09 1.35,69.74 L6.86,74.75 C8.34,76.1 10.57,76.2 12.17,74.99 L29.34,61.96 L68.75,97.92 C70.62,99.79 73.48,100.27 75.86,99.13 L96.46,89.2 C98.62,88.16 100,85.97 100,83.57 V16.43 C100,14.03 98.62,11.84 96.46,10.8 Z M75.02,27.29 L45.12,50 L75.02,72.71 V27.29 Z" fill="#39a3ef" clip-path="url(#lgc)" fill-rule="evenodd"/></g><g fill="none" stroke="#424242" stroke-width="1.1"><rect x="1161.3" y="9.3" width="14.6" height="14.5" rx="1.5"/><rect x="1190.2" y="9.3" width="15" height="14.5" rx="1.5"/><path d="M1190.2,19.5 H1205.2"/><rect x="1219.3" y="9.3" width="15" height="14.5" rx="1.5"/><rect x="1249.5" y="9.3" width="6.5" height="14.5" rx="1.2"/><rect x="1259" y="9.3" width="5" height="5.5" rx="1"/><rect x="1259" y="18.3" width="5" height="5.5" rx="1"/></g><rect x="1161" y="9" width="7.5" height="15" rx="1.2" fill="#333"/><rect x="1227" y="9" width="7.8" height="15" rx="1.2" fill="#333"/><path d="M1287,17.2 H1297.3" stroke="#333" stroke-width="1"/><rect x="1330.5" y="12.5" width="9" height="9" rx="1.5" fill="none" stroke="#333" stroke-width="1"/><path d="M1373.5,12.5 L1383,22 M1383,12.5 L1373.5,22" stroke="#333" stroke-width="1"/><rect x="0" y="34" width="2" height="53" fill="#d0d0d0"/><g fill="#2c2c2c" stroke="#ffffff" stroke-width="2" stroke-linejoin="round"><rect x="15.5" y="55" width="14.5" height="18.2" rx="1.5"/><path d="M23.9,48.6 H31.9 L37.2,53.9 V65.1 Q37.2,66.6 35.7,66.6 H23.9 Q22.4,66.6 22.4,65.1 V50.1 Q22.4,48.6 23.9,48.6 Z"/><path d="M31.7,48.8 V53.9 H37" fill="none"/></g><g fill="none" stroke="#858585" stroke-width="2"><circle cx="30.2" cy="110.5" r="8.6"/><path d="M16,126.7 L24.2,117.6"/></g><g fill="none" stroke="#858585" stroke-width="2"><circle cx="21" cy="158.4" r="3.2"/><circle cx="32.4" cy="163.2" r="3.2"/><circle cx="21" cy="177.4" r="3.2"/><path d="M21,161.6 V174.2"/><path d="M32.4,166.4 C32.4,171.5 27,172.5 21.5,173"/></g><circle cx="35.6" cy="177.4" r="9" fill="#007acc"/><text x="35.6" y="181.6" text-anchor="middle" font-family="Liberation Sans" font-weight="700" font-size="11.5" fill="#fff">6</text><g fill="none" stroke="#858585" stroke-width="2" stroke-linejoin="round"><path d="M22.7,221.5 V209.8 L40,219.5 L28.5,226.5"/><ellipse cx="20.2" cy="230" rx="4.4" ry="5.4"/><path d="M16,227.6 H24.4"/><path d="M15.5,226 L13,224 M24.5,226 L27,224 M15.4,230 H12.5 M24.6,230 H27.5 M15.5,234 L13,236.5 M24.5,234 L27,236.5 M17,225.5 Q20,222 23,225.5"/></g><g fill="none" stroke="#858585" stroke-width="2"><path d="M22,283.6 H15.7 V266.3 H37.6 V276"/><path d="M19.4,287 H26"/><circle cx="32.8" cy="283.5" r="6.2" fill="#2c2c2c"/></g><path d="M29.8,282.6 L31.9,284.4 L29.8,286.2 M35.8,280.8 L33.7,282.6 L35.8,284.4" fill="none" stroke="#858585" stroke-width="1.1"/><g fill="none" stroke="#858585" stroke-width="2"><rect x="14.5" y="323.7" width="10.1" height="9.1"/><rect x="14.5" y="332.8" width="10.1" height="9.7"/><rect x="24.6" y="332.8" width="10" height="9.7"/><rect x="29.2" y="318.7" width="9.6" height="9.2"/></g><circle cx="35.6" cy="339" r="9" fill="#007acc"/><text x="35.6" y="343.2" text-anchor="middle" font-family="Liberation Sans" font-weight="700" font-size="11.5" fill="#fff">3</text><circle cx="26.4" cy="384.4" r="13.4" fill="#858585"/><path d="M13.3,379.9 Q21,376.3 27.4,380.4 Q29.6,382.4 28.9,385.2" fill="none" stroke="#2c2c2c" stroke-width="1.2"/><path d="M23.3,383 C24.8,380.6 28.6,380.8 29.2,384.3 C29.6,386.8 33,388.3 38.8,388.9 L38.2,390.8 C33,391.8 27,391.2 24.6,388.8 C22.8,387 22.4,384.6 23.3,383 Z" fill="#2c2c2c"/><path d="M23.8,383.2 Q21,388 22.4,392.6 Q23.4,395.6 25.4,398.2" fill="none" stroke="#2c2c2c" stroke-width="1.2"/><g fill="none" stroke="#858585" stroke-linejoin="miter"><path d="M31.4,430.2 A10.6,10.6 0 1 0 25,449.3 H36 V439.5" stroke-width="2.5"/><path d="M20,436.8 L26.2,443 L38.6,430.4" stroke-width="3"/></g><path d="M21.4,481.3 H24.2 L26.3,492.3 L20,496.4 L23.4,500 L21.8,503.7 H15 Q13.9,503.7 14.3,502.6 Z" fill="#858585"/><path d="M24.2,481.3 H31 Q31.5,481.3 31.7,482 L38.5,502.3 Q38.7,503.2 37.8,503.2 H29.2 L23.6,499.8 M24.4,481.6 L30.2,503" fill="none" stroke="#858585" stroke-width="1.5" stroke-linejoin="round"/><circle cx="26.3" cy="546" r="13.4" fill="#444444"/><path d="M17,540 H36 V550 L32,553 H28.5 L26.5,549 L24.5,553 H21 L17,550 Z" fill="#7a7a7a"/><path d="M20,543 H24.5 V546 H20 Z M28,543 H32.5 V546 H28 Z" fill="#444"/><g fill="none" stroke="#858585" stroke-width="2"><circle cx="26.6" cy="680" r="12.5"/><circle cx="26.6" cy="676.5" r="5"/><path d="M18.3,689.3 C19.5,684.5 23,682.5 26.6,682.5 C30.2,682.5 33.7,684.5 34.9,689.3"/></g><g fill="none" stroke="#858585" stroke-width="2" stroke-linejoin="round"><path d="M39.36,731.92 L39.36,736.88 L35.84,736.62 L34.70,739.36 L37.38,741.67 L33.87,745.18 L31.56,742.50 L28.82,743.64 L29.08,747.16 L24.12,747.16 L24.38,743.64 L21.64,742.50 L19.33,745.18 L15.82,741.67 L18.50,739.36 L17.36,736.62 L13.84,736.88 L13.84,731.92 L17.36,732.18 L18.50,729.44 L15.82,727.13 L19.33,723.62 L21.64,726.30 L24.38,725.16 L24.12,721.64 L29.08,721.64 L28.82,725.16 L31.56,726.30 L33.87,723.62 L37.38,727.13 L34.70,729.44 L35.84,732.18 Z"/><circle cx="26.6" cy="734.4" r="3.2"/></g><g fill="none" stroke="#616161" stroke-width="1.1"><circle cx="351.5" cy="53" r="0.1"/></g><g fill="#616161"><circle cx="351.6" cy="53" r="1.2"/><circle cx="357.6" cy="53" r="1.2"/><circle cx="363.6" cy="53" r="1.2"/></g><path d="M60.4,82.4 L65.2,87.8 L70,82.4" fill="none" stroke="#424242" stroke-width="1.1"/><path d="M76.4,99.7 L82.2,104.8 L76.4,109.9" fill="none" stroke="#555555" stroke-width="1.1"/><path d="M76.4,124.45 L82.2,129.55 L76.4,134.65" fill="none" stroke="#555555" stroke-width="1.1"/><path d="M76.4,149.2 L82.2,154.3 L76.4,159.4" fill="none" stroke="#555555" stroke-width="1.1"/><path d="M76.4,173.95 L82.2,179.05 L76.4,184.15" fill="none" stroke="#555555" stroke-width="1.1"/><path d="M76.4,198.7 L82.2,203.8 L76.4,208.9" fill="none" stroke="#555555" stroke-width="1.1"/><path d="M76.4,223.45 L82.2,228.55 L76.4,233.65" fill="none" stroke="#555555" stroke-width="1.1"/><path d="M76.4,248.2 L82.2,253.3 L76.4,258.4" fill="none" stroke="#555555" stroke-width="1.1"/><path d="M76.4,272.95 L82.2,278.05 L76.4,283.15" fill="none" stroke="#555555" stroke-width="1.1"/><path d="M76.4,297.7 L82.2,302.8 L76.4,307.9" fill="none" stroke="#555555" stroke-width="1.1"/><path d="M76.4,322.45 L82.2,327.55 L76.4,332.65" fill="none" stroke="#555555" stroke-width="1.1"/><path d="M76.4,347.2 L82.2,352.3 L76.4,357.4" fill="none" stroke="#555555" stroke-width="1.1"/><path d="M76.4,371.95 L82.2,377.05 L76.4,382.15" fill="none" stroke="#555555" stroke-width="1.1"/><path d="M76.4,396.7 L82.2,401.8 L76.4,406.9" fill="none" stroke="#555555" stroke-width="1.1"/><path d="M76.4,421.45 L82.2,426.55 L76.4,431.65" fill="none" stroke="#555555" stroke-width="1.1"/><path d="M76.4,446.2 L82.2,451.3 L76.4,456.4" fill="none" stroke="#555555" stroke-width="1.1"/><path d="M74.4,472.95 L79.6,478.75 L84.8,472.95" fill="none" stroke="#424242" stroke-width="1.1"/><path d="M84.60000000000001,495.7 L90.4,500.8 L84.60000000000001,505.9" fill="none" stroke="#555555" stroke-width="1.1"/><path d="M85,521.25 L81.5,525.25 L85,529.25 M89.2,521.25 L92.7,525.25 L89.2,529.25" fill="none" stroke="#e37933" stroke-width="1.4"/><circle cx="87" cy="550.0" r="6.4" fill="none" stroke="#519aba" stroke-width="1.2"/><path d="M87,549.0 V553.6" stroke="#519aba" stroke-width="1.6"/><circle cx="87" cy="546.6" r="0.9" fill="#519aba"/><path d="M76.4,569.95 L82.2,575.05 L76.4,580.15" fill="none" stroke="#555555" stroke-width="1.1"/><path d="M76.4,594.7 L82.2,599.8 L76.4,604.9" fill="none" stroke="#555555" stroke-width="1.1"/><path d="M78,618.45 L83.8,624.25 L78,630.05 L72.2,624.25 Z" fill="#41535b"/><path d="M76,621.25 L78.6,623.85 M78.6,623.85 V627.65 M78.6,623.85 L81,625.65" stroke="#f3f3f3" stroke-width="1"/><path d="M75.8,643.2 Q74,643.2 74,645.0 V647.4 Q74,648.7 72.6,648.7 Q74,648.7 74,650.2 V652.6 Q74,654.3 75.8,654.3 M80.4,643.2 Q82.2,643.2 82.2,645.0 V647.4 Q82.2,648.7 83.6,648.7 Q82.2,648.7 82.2,650.2 V652.6 Q82.2,654.3 80.4,654.3" fill="none" stroke="#b8b832" stroke-width="1.4"/><path d="M75.3,667.25 H80.5 V672.75 H83.5 L78,679.55 L72.4,672.75 H75.3 Z" fill="#519aba"/><circle cx="359.6" cy="475.3" r="4.3" fill="#c8b28f"/><circle cx="359.6" cy="500" r="4.3" fill="#c8b28f"/><path d="M63,695 L68.5,700.3 L63,705.5" fill="none" stroke="#424242" stroke-width="1.1"/><path d="M63,719.5 L68.5,724.8 L63,730.0" fill="none" stroke="#424242" stroke-width="1.1"/><path d="M63,744.5 L68.5,749.8 L63,755.0" fill="none" stroke="#424242" stroke-width="1.1"/><path d="M404,50.4 L400.2,54.2 L404,58 M407.2,50.4 L411,54.2 L407.2,58" fill="none" stroke="#e37933" stroke-width="1.3"/><path d="M515.6,48.6 L525.4,58 M525.4,48.6 L515.6,58" fill="none" stroke="#424242" stroke-width="1.1"/><path d="M473,80.8 L477.8,85.8 L473,90.8" fill="none" stroke="#616161" stroke-width="1"/><path d="M582.3,80.8 L587.0999999999999,85.8 L582.3,90.8" fill="none" stroke="#616161" stroke-width="1"/><path d="M651,80.8 L655.8,85.8 L651,90.8" fill="none" stroke="#616161" stroke-width="1"/><path d="M724,80.8 L728.8,85.8 L724,90.8" fill="none" stroke="#616161" stroke-width="1"/><path d="M492,82 L488.4,85.8 L492,89.6 M496.2,82 L499.8,85.8 L496.2,89.6" fill="none" stroke="#e37933" stroke-width="1.3"/><g fill="none" stroke="#1f84d6" stroke-width="1.2" stroke-linejoin="round"><path d="M602.2,79.2 L609.6,82.6 V89.8 L602.2,93.2 L594.9,89.8 V82.6 Z"/><path d="M594.9,82.6 L602.2,86 L609.6,82.6 M602.2,86 V93.2"/></g><g fill="none" stroke="#1f84d6" stroke-width="1.2" stroke-linejoin="round"><path d="M670.8000000000001,79.2 L678.2,82.6 V89.8 L670.8000000000001,93.2 L663.5,89.8 V82.6 Z"/><path d="M663.5,82.6 L670.8000000000001,86 L678.2,82.6 M670.8000000000001,86 V93.2"/></g><g fill="none" stroke="#1f84d6" stroke-width="1.2" stroke-linejoin="round"><path d="M742.8000000000001,79.2 L750.2,82.6 V89.8 L742.8000000000001,93.2 L735.5,89.8 V82.6 Z"/><path d="M735.5,82.6 L742.8000000000001,86 L750.2,82.6 M742.8000000000001,86 V93.2"/></g><g fill="none" stroke="#424242" stroke-width="1.1"><circle cx="1120" cy="47.5" r="2.4"/><circle cx="1129.4" cy="58.6" r="2.4"/><path d="M1120,50 V56 Q1120,58.6 1122.6,58.6 H1124 M1122,56.5 L1124.3,58.6 L1122,60.7"/><path d="M1129.4,56.2 V50 Q1129.4,47.5 1126.8,47.5 H1125.4 M1127.5,45.3 L1125.2,47.5 L1127.5,49.7"/><rect x="1147.5" y="45.5" width="14" height="14" rx="1.5"/><path d="M1154.5,45.5 V59.5"/></g><g fill="#424242"><circle cx="1177.3" cy="52.9" r="1.2"/><circle cx="1183.2" cy="52.9" r="1.2"/><circle cx="1189.1" cy="52.9" r="1.2"/></g><g fill="none" stroke="#424242" stroke-width="1.1"><rect x="1223.6" y="45.5" width="15.2" height="14.8" rx="1.5"/><path d="M1229,49 L1232.8,52.9 L1229,56.8"/><rect x="1255.2" y="45.5" width="15.2" height="14.8" rx="1.5"/><path d="M1260.6,49 L1264.4,52.9 L1260.6,56.8"/><path d="M1324,45.8 V59.7 M1317,52.8 H1331.2" stroke-width="1.3"/><path d="M1339.3,51.2 L1343.4,55.2 L1347.5,51.2"/><rect x="1360.2" y="45.5" width="14.8" height="14.8" rx="1.5"/><path d="M1360.2,52.9 H1375"/><path d="M1393,48.5 H1402 M1395,48.5 V60.3 H1402 M1397.5,51 V58 M1400,51 V58 M1396.5,48.5 V46 H1402"/></g><rect x="1220" y="66.8" width="22.5" height="1.2" fill="#424242"/><g fill="none" stroke="#ffffff" stroke-width="1.1"><path d="M14,771.3 L18.6,775.5 L14.2,779.8 M23.6,767.4 L19.5,771.6 L23.6,775.7"/><circle cx="51.5" cy="768.6" r="2"/><circle cx="51.5" cy="779.6" r="2"/><circle cx="58.6" cy="771.5" r="2"/><path d="M51.5,770.6 V777.6 M58.6,773.5 C58.6,776 55,776.5 51.8,777.3"/><path d="M122,773.6 A5.6,5.6 0 0 1 132.9,772.6 M132.9,775.6 A5.6,5.6 0 0 1 122,776.6" stroke-width="1.3"/><path d="M130.6,772.2 L133.1,772.8 L134,770 M124.4,776.2 L121.9,775.6 L121,778.4"/><circle cx="161" cy="774.3" r="6.4"/><path d="M158.2,771.5 L163.8,777.1 M163.8,771.5 L158.2,777.1"/><path d="M191.8,768 L198.3,780.6 H185.3 Z"/><path d="M191.8,772.3 V776.5 M191.8,777.8 V779"/><circle cx="222" cy="774.3" r="6.4"/><path d="M222,773 V777.6 M222,770.5 V771.6" stroke-width="1.5"/><path d="M1252.8,774.1 L1256.2,778.1 L1263.7,769.4 M1257.1,774.3 L1260.1,778.1 L1267.8,769.4"/><path d="M1336.5,780.2 C1336.5,776.5 1339,774.8 1341.5,774.8 C1344,774.8 1346.5,776.5 1346.5,780.2"/><circle cx="1341.5" cy="771.3" r="2.8"/><path d="M1340,767.5 H1349.5 V774.5 H1346 L1344.5,776"/><path d="M1369.5,779 H1381 L1379.5,776.5 V772.5 A4.3,4.3 0 0 0 1371,772.5 V776.5 Z M1373.5,779.5 A1.8,1.8 0 0 0 1377,779.5"/></g><path d="M1219.6,777.5 C1219.6,775 1221,773.8 1222.4,773.6 L1231.4,773.6 C1233,773.8 1234.4,775 1234.4,777.5 C1234.4,780.5 1231,781.6 1227,781.6 C1223,781.6 1219.6,780.5 1219.6,777.5 Z" fill="#fff"/><circle cx="1224.1" cy="771.4" r="3.4" fill="none" stroke="#fff" stroke-width="1.6"/><circle cx="1229.9" cy="771.4" r="3.4" fill="none" stroke="#fff" stroke-width="1.6"/><rect x="1222.4" y="775" width="9.2" height="4.2" rx="1" fill="#007acc"/><path d="M1224.9,776.2 V778 M1229.1,776.2 V778" stroke="#fff" stroke-width="1.1"/></svg>
</div>
<div class="a" style="left:0;top:0;width:1400px;height:786px;border:1px solid #9d9d9d;border-radius:8px"></div>
</body></html>
